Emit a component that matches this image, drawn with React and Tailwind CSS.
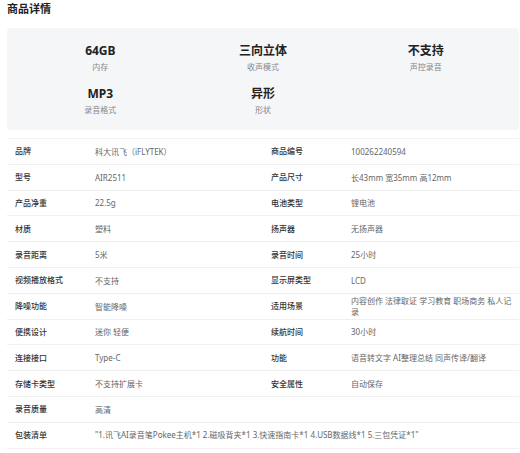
const stats = [
  { value: "64GB", label: "内存" },
  { value: "三向立体", label: "收声模式" },
  { value: "不支持", label: "声控录音" },
  { value: "MP3", label: "录音格式" },
  { value: "异形", label: "形状" },
];

const rows = [
  ["品牌", "科大讯飞（iFLYTEK）", "商品编号", "100262240594"],
  ["型号", "AIR2511", "产品尺寸", "长43mm 宽35mm 高12mm"],
  ["产品净重", "22.5g", "电池类型", "锂电池"],
  ["材质", "塑料", "扬声器", "无扬声器"],
  ["录音距离", "5米", "录音时间", "25小时"],
  ["视频播放格式", "不支持", "显示屏类型", "LCD"],
  ["降噪功能", "智能降噪", "适用场景", "内容创作 法律取证 学习教育 职场商务 私人记录"],
  ["便携设计", "迷你 轻便", "续航时间", "30小时"],
  ["连接接口", "Type-C", "功能", "语音转文字 AI整理总结 同声传译/翻译"],
  ["存储卡类型", "不支持扩展卡", "安全属性", "自动保存"],
  ["录音质量", "高清", "", ""],
];

function Cell({ label, value }) {
  return (
    <div className="flex h-full w-1/2 items-center">
      <div className="w-[88px] shrink-0 pl-[8px] font-medium text-[#333]">{label}</div>
      <div className="pr-[5px] leading-[11px] text-[#666]">{value}</div>
    </div>
  );
}

export default function App() {
  return (
    <div
      className="ml-[7px] w-[512px] bg-white"
      style={{ fontFamily: '"Noto Sans", "Noto Sans CJK SC", sans-serif' }}
    >
      <h2 className="pt-[1px] text-[11px] leading-[15px] font-bold text-[#222]">商品详情</h2>

      <div className="mt-[12px] rounded-[4px] bg-[#f5f6f8] px-[12px] py-[15px]">
        <div className="grid grid-cols-3 gap-y-[14px]">
          {stats.map((s) => (
            <div key={s.label} className="flex flex-col items-center">
              <div className="text-[12px] leading-[16px] font-bold text-[#222]">{s.value}</div>
              <div className="mt-[3px] text-[8px] leading-[10px] text-[#888]">{s.label}</div>
            </div>
          ))}
        </div>
      </div>

      <div className="mt-[8px] border-t border-[#f2f2f2] text-[8px]">
        {rows.map((r) => (
          <div key={r[0]} className="flex h-[25.8px] items-center border-b border-[#f0f0f0]">
            <Cell label={r[0]} value={r[1]} />
            <Cell label={r[2]} value={r[3]} />
          </div>
        ))}
        <div className="flex h-[25.8px] items-center border-b border-[#f0f0f0]">
          <div className="w-[88px] shrink-0 pl-[8px] font-medium text-[#333]">包装清单</div>
          <div className="text-[#666]">
            "1.讯飞AI录音笔Pokee主机*1 2.磁吸背夹*1 3.快速指南卡*1 4.USB数据线*1 5.三包凭证*1"
          </div>
        </div>
      </div>
    </div>
  );
}
